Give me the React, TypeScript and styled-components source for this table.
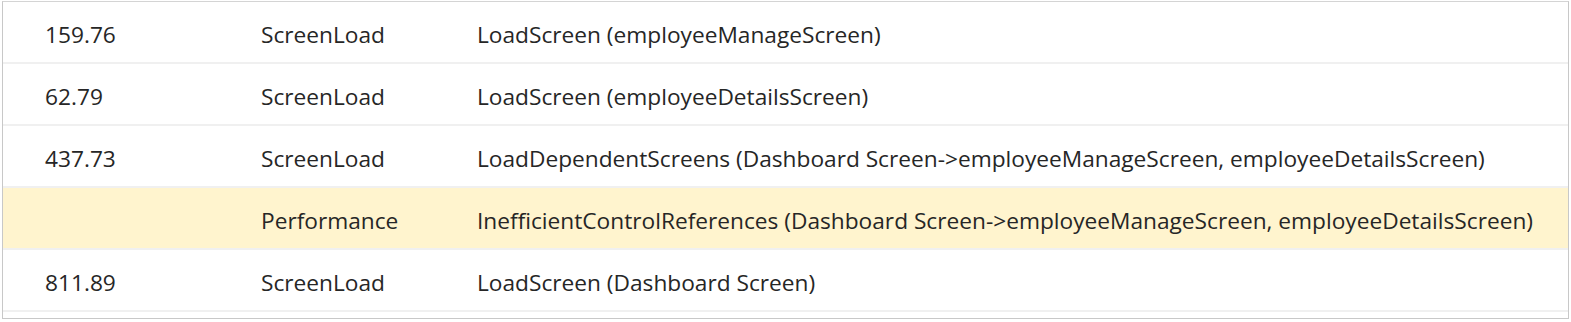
import styled, { createGlobalStyle } from 'styled-components';

interface Issue {
  duration: string;
  category: string;
  detail: string;
  warning?: boolean;
}

const issues: Issue[] = [
  { duration: '159.76', category: 'ScreenLoad', detail: 'LoadScreen (employeeManageScreen)' },
  { duration: '62.79', category: 'ScreenLoad', detail: 'LoadScreen (employeeDetailsScreen)' },
  {
    duration: '437.73',
    category: 'ScreenLoad',
    detail: 'LoadDependentScreens (Dashboard Screen->employeeManageScreen, employeeDetailsScreen)',
  },
  {
    duration: '',
    category: 'Performance',
    detail: 'InefficientControlReferences (Dashboard Screen->employeeManageScreen, employeeDetailsScreen)',
    warning: true,
  },
  { duration: '811.89', category: 'ScreenLoad', detail: 'LoadScreen (Dashboard Screen)' },
];

const GlobalStyle = createGlobalStyle`
  body {
    margin: 0;
    background: #ffffff;
    font-family: "Open Sans", "Noto Sans", sans-serif;
  }
`;

const Page = styled.div`
  padding: 1px 2px 0 2px;
`;

const Frame = styled.div`
  width: 1565px;
  height: 316px;
  border: 1px solid #c8c8c8;
  border-top-color: #d4d4d4;
  background: #ffffff;
  overflow: hidden;
`;

const Row = styled.div<{ $warning?: boolean }>`
  display: grid;
  grid-template-columns: 216px 216px 1fr;
  align-items: center;
  height: 60px;
  border-bottom: 2px solid #f0f0f0;
  background: ${({ $warning }) => ($warning ? '#fff4ce' : '#ffffff')};
`;

const Cell = styled.div`
  padding: 5px 0 0 42px;
  font-size: 22.7px;
  line-height: 30px;
  color: #262626;
  white-space: nowrap;
`;

const App = () => {
  return (
    <Page>
      <GlobalStyle />
      <Frame>
        {issues.map((issue, i) => (
          <Row key={i} $warning={issue.warning}>
            <Cell>{issue.duration}</Cell>
            <Cell>{issue.category}</Cell>
            <Cell>{issue.detail}</Cell>
          </Row>
        ))}
      </Frame>
    </Page>
  );
};

export default App;
